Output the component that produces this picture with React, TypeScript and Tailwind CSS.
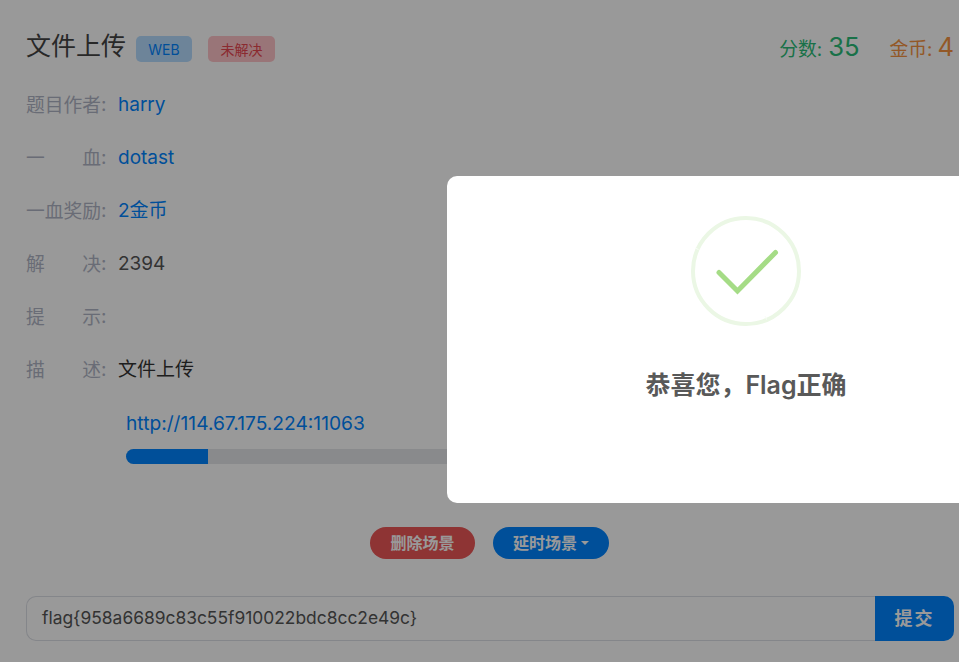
import React from 'react'

const rows = [
  { label: ['题', '目', '作', '者'], value: 'harry', tone: 'text-[#0084ff]' },
  { label: ['一', '血'], value: 'dotast', tone: 'text-[#0084ff]' },
  { label: ['一', '血', '奖', '励'], value: '2金币', tone: 'text-[#0084ff]' },
  { label: ['解', '决'], value: '2394', tone: 'text-[#555555]' },
  { label: ['提', '示'], value: '', tone: 'text-[#555555]' },
  { label: ['描', '述'], value: '文件上传', tone: 'text-[#333333]' },
]

export default function App() {
  return (
    <div className="relative w-[959px] h-[662px] overflow-hidden bg-white font-['Inter','Noto_Sans_CJK_SC',sans-serif]">
      <div className="flex flex-col w-[928px] ml-[26px] h-full">
        {/* Header */}
        <div className="flex items-center justify-between h-[36px] mt-[28px]">
          <div className="flex items-center">
            <h1 className="text-[25px] leading-[36px] text-[#444444]">文件上传</h1>
            <span className="ml-[10px] mt-[6px] w-[56px] h-[26px] flex items-center justify-center rounded-[5px] bg-[#b6dcff] text-[14px] text-[#0084ff]">
              WEB
            </span>
            <span className="ml-[16px] mt-[6px] w-[67px] h-[26px] flex items-center justify-center rounded-[5px] bg-[#ffc4c8] text-[14px] text-[#e84650]">
              未解决
            </span>
          </div>
          <div className="flex items-baseline mt-[2px]">
            <span className="text-[18.75px] text-[#2bbd78]">分数:</span>
            <span className="ml-[6px] text-[25.6px] text-[#2bbd78]">35</span>
            <span className="ml-[30px] text-[18.75px] text-[#f59342]">金币:</span>
            <span className="ml-[5px] text-[25.6px] text-[#f59342]">4</span>
          </div>
        </div>

        {/* Info rows */}
        <div className="flex flex-col mt-[15px]">
          {rows.map((row) => (
            <div key={row.label.join('')} className="flex items-center h-[53px] text-[19px]">
              <div className="flex justify-between w-[75px] mt-[2px] text-[18.75px] text-[#b0b5c5]">
                {row.label.map((ch) => (
                  <span key={ch}>{ch}</span>
                ))}
              </div>
              <span className="w-[17px] text-[#b0b5c5]">:</span>
              <span className={row.tone}>{row.value}</span>
            </div>
          ))}
        </div>

        {/* Scene */}
        <div className="ml-[100px] mt-[12px]">
          <a className="block text-[19.2px] leading-[28px] text-[#0084ff]">http://114.67.175.224:11063</a>
          <div className="mt-[12px] h-[15px] rounded-full bg-[#e4e6ea] overflow-hidden">
            <div className="h-full w-[82px] bg-[#0084ff]" />
          </div>
        </div>

        <div className="flex justify-center gap-[18px] mt-[63px] mr-[1px]">
          <button className="h-[32px] w-[105px] rounded-full bg-[#ed5757] text-[16px] font-bold text-white">
            删除场景
          </button>
          <button className="h-[32px] w-[116px] rounded-full bg-[#0084ff] text-[16px] font-bold text-white flex items-center justify-center">
            延时场景
            <span className="ml-[4px] border-x-[4px] border-x-transparent border-t-[4px] border-t-white" />
          </button>
        </div>

        {/* Flag input */}
        <div className="flex mt-[37px] h-[45px]">
          <div className="flex-1 flex items-center pl-[15px] border border-[#dcdfe6] border-r-0 rounded-l-[10px] text-[17.4px] text-[#555555]">
            flag{'{958a6689c83c55f910022bdc8cc2e49c}'}
          </div>
          <button className="w-[79px] rounded-r-[10px] bg-[#0084ff] text-[18px] font-bold tracking-[2px] text-white">
            提交
          </button>
        </div>
      </div>

      {/* Overlay */}
      <div className="absolute inset-0 bg-black/40" />

      {/* Modal */}
      <div className="absolute left-[447px] top-[176px] w-[598px] h-[327px] rounded-[10px] bg-white flex flex-col items-center">
        <svg className="mt-[40px]" width="110" height="110" viewBox="0 0 110 110" fill="none">
          <circle cx="55" cy="55" r="53" stroke="#ebf7e5" strokeWidth="4" />
          <path d="M7.5 33.5 L4 32" stroke="#fafdf8" strokeWidth="1" />
          <path d="M75.5 103.5 L74 100" stroke="#fafdf8" strokeWidth="1" />
          <path d="M28 56.5 L46.5 75 L84.5 36.5" stroke="#a5dc86" strokeWidth="5" strokeLinecap="round" strokeLinejoin="miter" />
        </svg>
        <h2 className="mt-[40px] text-[25px] leading-[38px] font-semibold text-[#595959]">恭喜您，Flag正确</h2>
      </div>
    </div>
  )
}
